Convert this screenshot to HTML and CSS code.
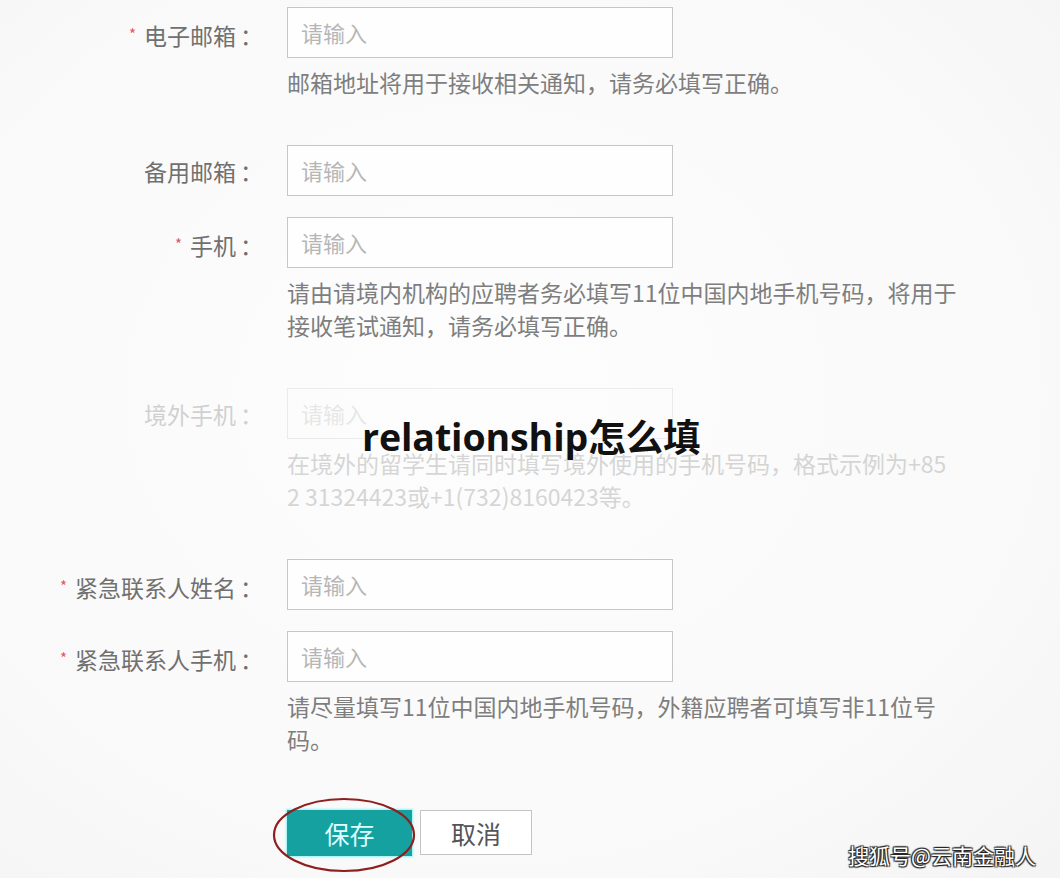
FILE: index.html
```html
<!DOCTYPE html>
<html lang="zh-CN">
<head>
<meta charset="utf-8">
<title>表单</title>
<link rel="stylesheet" href="styles.css">
</head>
<body>
<div class="page">
  <div class="form">
    <div class="row">
      <div class="label"><span class="req">*</span>电子邮箱<span class="colon">：</span></div>
      <div class="field">
        <div class="input">请输入</div>
        <div class="help">邮箱地址将用于接收相关通知，请务必填写正确。</div>
      </div>
    </div>
    <div class="row after-help">
      <div class="label">备用邮箱<span class="colon">：</span></div>
      <div class="field">
        <div class="input">请输入</div>
      </div>
    </div>
    <div class="row">
      <div class="label"><span class="req">*</span>手机<span class="colon">：</span></div>
      <div class="field">
        <div class="input">请输入</div>
        <div class="help">请由请境内机构的应聘者务必填写11位中国内地手机号码，将用于<br>接收笔试通知，请务必填写正确。</div>
      </div>
    </div>
    <div class="row after-help faded">
      <div class="label">境外手机<span class="colon">：</span></div>
      <div class="field">
        <div class="input">请输入</div>
        <div class="help">在境外的留学生请同时填写境外使用的手机号码，格式示例为+85<br>2 31324423或+1(732)8160423等。</div>
      </div>
    </div>
    <div class="row after-help">
      <div class="label"><span class="req">*</span>紧急联系人姓名<span class="colon">：</span></div>
      <div class="field">
        <div class="input">请输入</div>
      </div>
    </div>
    <div class="row">
      <div class="label"><span class="req">*</span>紧急联系人手机<span class="colon">：</span></div>
      <div class="field">
        <div class="input">请输入</div>
        <div class="help">请尽量填写11位中国内地手机号码，外籍应聘者可填写非11位号<br>码。</div>
      </div>
    </div>
    <div class="actions">
      <div class="btn-wrap">
        <button class="btn primary">保存</button>
        <svg class="circle" viewBox="0 0 144 76" width="144" height="76" aria-hidden="true">
          <ellipse cx="72" cy="38" rx="70" ry="36" fill="none" stroke="#8e1f1f" stroke-width="2.2"/>
        </svg>
      </div>
      <button class="btn">取消</button>
    </div>
  </div>
  <div class="title">relationship怎么填</div>
  <div class="watermark">搜狐号@云南金融人</div>
</div>
</body>
</html>
```
FILE: styles.css
```css
html, body {
  margin: 0;
  padding: 0;
}
body {
  background: #fbfbfb;
  font-family: "Noto Sans CJK SC", "Noto Sans", sans-serif;
  color: #666;
}
.page {
  position: relative;
  width: 1060px;
  height: 878px;
  overflow: hidden;
  background: radial-gradient(ellipse at 45% 45%, #fdfdfd 0%, #f9f9f9 70%, #f4f4f4 100%);
}
.form {
  padding-top: 7px;
  display: flex;
  flex-direction: column;
}
.row {
  display: grid;
  grid-template-columns: 260px 386px;
  column-gap: 27px;
  align-items: start;
  margin-top: 21px;
}
.row:first-child {
  margin-top: 0;
}
.row.after-help {
  margin-top: 46px;
}
.row.faded {
  opacity: 0.3;
}
.label {
  text-align: right;
  font-size: 23px;
  line-height: 53px;
  height: 51px;
  color: #707070;
  white-space: nowrap;
}
.colon {
  display: inline-block;
  margin-left: 4px;
  width: 20px;
  text-align: left;
}
.req {
  color: #e0566a;
  font-size: 15px;
  vertical-align: 5px;
  margin-right: 8px;
}
.input {
  box-sizing: border-box;
  height: 51px;
  border: 1.5px solid #c6c6c6;
  background: #fefefe;
  padding-left: 13px;
  font-size: 22px;
  line-height: 48px;
  color: #b6b6b6;
}
.help {
  margin-top: 8px;
  font-size: 23px;
  line-height: 33px;
  color: #7e7e7e;
  white-space: nowrap;
}
.actions {
  display: flex;
  gap: 8px;
  margin-top: 54px;
  margin-left: 287px;
}
.btn-wrap {
  position: relative;
}
.btn {
  box-sizing: border-box;
  height: 45px;
  width: 112px;
  border: 1.5px solid #c4c4c4;
  background: #fff;
  font-family: "Noto Sans CJK SC", sans-serif;
  font-size: 25px;
  color: #555;
  padding: 0;
}
.btn.primary {
  width: 125px;
  height: 46px;
  border: none;
  background: #16a1a1;
  color: #dcffff;
  box-shadow: 0 0 2px 1px #8ff5f5;
}
.circle {
  position: absolute;
  left: -15px;
  top: -13px;
  pointer-events: none;
}
.title {
  position: absolute;
  left: 362px;
  top: 407px;
  font-family: "Open Sans", "Noto Sans CJK SC", sans-serif;
  font-weight: 700;
  font-size: 37.5px;
  color: #111;
  letter-spacing: -0.1px;
  text-shadow: 0 0 3px #fff, 0 0 3px #fff;
  white-space: nowrap;
}
.watermark {
  position: absolute;
  right: 24px;
  bottom: 8px;
  font-size: 21px;
  color: #fff;
  text-shadow: 1px 1px 1px #222, -1px -1px 1px #222, 1px -1px 1px #222, -1px 1px 1px #222;
  white-space: nowrap;
}
```
